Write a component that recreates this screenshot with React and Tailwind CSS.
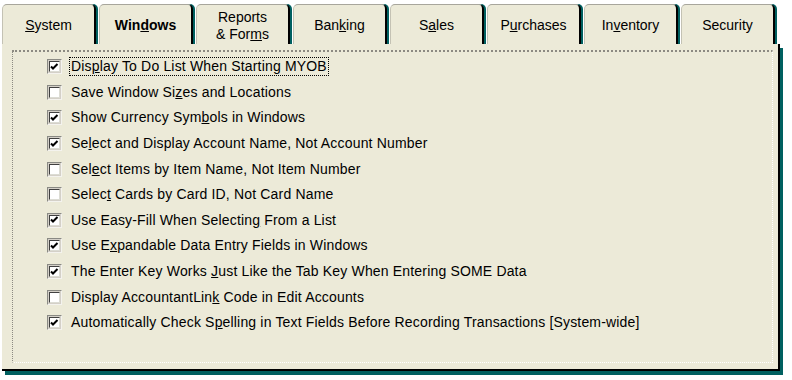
function Tab({ children, bold }) {
  return (
    <div
      className={
        "flex h-[40px] w-[94px] items-center justify-center rounded-t-[5px] border-l border-t border-r-2 border-l-[#c4c2b4] border-t-[#a8a69c] border-r-black bg-[#ecead8] pt-[2px] text-center text-[14px] leading-[17px] text-black shadow-[2px_0_0_#006060] " +
        (bold ? "font-bold" : "")
      }
    >
      <div>{children}</div>
    </div>
  )
}

function CheckBox({ checked }) {
  return (
    <div className="flex h-[15px] w-[15px] shrink-0 items-center justify-center border border-t-[#8a8a84] border-l-[#8a8a84] border-r-[#f4f3ee] border-b-[#f4f3ee] bg-[#d4d0c8] p-px">
      <div className="flex h-full w-full items-center justify-center border border-t-[#404040] border-l-[#404040] border-r-[#dcdcd4] border-b-[#dcdcd4] bg-white">
        {checked && (
          <svg width="9" height="8" viewBox="0 0 9 8">
            <path d="M1 3.5 L3 5.5 L7.5 1" fill="none" stroke="black" strokeWidth="2" />
          </svg>
        )}
      </div>
    </div>
  )
}

const options = [
  { checked: true, text: <>Dis<u>p</u>lay To Do List When Starting MYOB</>, focus: true },
  { checked: false, text: <>Save Window Si<u>z</u>es and Locations</> },
  { checked: true, text: <>Show Currency Sym<u>b</u>ols in Windows</> },
  { checked: true, text: <>Se<u>l</u>ect and Display Account Name, Not Account Number</> },
  { checked: false, text: <>Sel<u>e</u>ct Items by Item Name, Not Item Number</> },
  { checked: false, text: <>Selec<u>t</u> Cards by Card ID, Not Card Name</> },
  { checked: true, text: <>Use Easy-Fill When Selectin<u>g</u> From a List</> },
  { checked: true, text: <>Use E<u>x</u>pandable Data Entry Fields in Windows</> },
  { checked: true, text: <>The Enter Key Works <u>J</u>ust Like the Tab Key When Entering SOME Data</> },
  { checked: false, text: <>Display AccountantLin<u>k</u> Code in Edit Accounts</> },
  { checked: true, text: <>Automatically Check S<u>p</u>elling in Text Fields Before Recording Transactions [System-wide]</> },
]

export default function App() {
  return (
    <div className="h-[380px] w-[792px] bg-white pl-[2px] pt-[4px] font-['Liberation_Sans',Arial,sans-serif] text-black">
      <div className="flex gap-[3px]">
        <Tab><u>S</u>ystem</Tab>
        <Tab bold>Win<u>d</u>ows</Tab>
        <Tab>Reports<br />&amp; For<u>m</u>s</Tab>
        <Tab>Ban<u>k</u>ing</Tab>
        <Tab>S<u>a</u>les</Tab>
        <Tab>P<u>u</u>rchases</Tab>
        <Tab>In<u>v</u>entory</Tab>
        <Tab>Security</Tab>
      </div>
      <div className="h-[327px] w-[778px] border-r-2 border-b-2 border-black bg-[#ecead8] pt-[6px] pl-[10px] shadow-[3px_4px_0_#006060]">
        <div className="h-[313px] w-[761px] border-l border-t-2 border-r border-b border-l-[#8c8a82] border-t-[#8c8a82] border-r-white border-b-white border-dotted pl-[34px] pt-[2px]">
          {options.map((o, i) => (
            <div key={i} className="flex h-[25.6px] items-center gap-[7px]">
              <CheckBox checked={o.checked} />
              <span
                className={
                  "whitespace-nowrap px-px text-[14px] leading-[17px] tracking-[0.17px] " +
                  (o.focus ? "border border-dotted border-black" : "border border-transparent")
                }
              >
                {o.text}
              </span>
            </div>
          ))}
        </div>
      </div>
    </div>
  )
}
